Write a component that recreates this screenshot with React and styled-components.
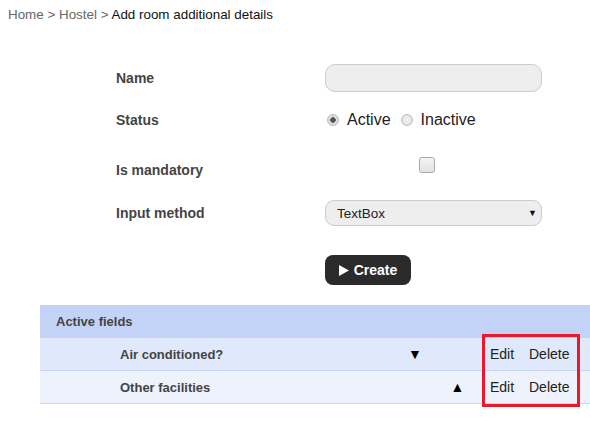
import React from 'react'
import styled, { createGlobalStyle } from 'styled-components'

const GlobalStyle = createGlobalStyle`
  body {
    margin: 0;
    background: #fff;
    font-family: "Liberation Sans", Arial, sans-serif;
  }
`

const Page = styled.div`
  width: 590px;
  height: 422px;
  overflow: hidden;
`

const Breadcrumb = styled.div`
  padding: 7px 0 0 8px;
  height: 17px;
  font-size: 13.4px;
  color: #666;
  & b { font-weight: normal; color: #111; }
`

const Form = styled.div`
  margin: 38px 0 0 116px;
  display: flex;
  flex-direction: column;
`

const Row = styled.div`
  display: flex;
  align-items: center;
  height: ${p => p.$h || 32}px;
  margin-top: ${p => p.$gap || 0}px;
`

const Label = styled.div`
  width: 209px;
  font-size: 14px;
  font-weight: bold;
  color: #444;
`

const TextInput = styled.input`
  box-sizing: border-box;
  width: 217px;
  height: 28px;
  border: 1px solid #ccc;
  border-radius: 10px;
  background: #eee;
  outline: none;
`

const RadioGroup = styled.div`
  display: flex;
  align-items: center;
  font-size: 16px;
  color: #222;
`

const Radio = styled.span`
  width: 10px;
  height: 10px;
  border-radius: 50%;
  border: 1px solid #bbb;
  background: radial-gradient(circle, ${p => p.$on ? '#555 0 2.5px, #ddd 3px' : '#f2f2f2 0, #ddd 100%'});
  margin: 0 8px 0 2px;
  ${p => p.$second && 'margin-left: 10px;'}
`

const Check = styled.span`
  width: 14px;
  height: 14px;
  border: 1px solid #aaa;
  border-radius: 3px;
  background: linear-gradient(#f4f4f4, #e2e2e2);
  margin: 0 0 10px 94px;
`

const SelectWrap = styled.div`
  position: relative;
  width: 217px;
  height: 26px;
`

const Select = styled.select`
  appearance: none;
  box-sizing: border-box;
  width: 100%;
  height: 100%;
  border: 1px solid #ccc;
  border-radius: 9px;
  background: #eee;
  padding: 0 0 0 11px;
  font-family: "Liberation Sans", Arial, sans-serif;
  font-size: 13.5px;
  color: #222;
  outline: none;
`

const Caret = styled.span`
  position: absolute;
  right: 5px;
  top: 8px;
  font-size: 9px;
  color: #111;
  pointer-events: none;
`

const CreateButton = styled.button`
  width: 86px;
  height: 30px;
  border: none;
  border-radius: 8px;
  background: #2b2b2b;
  color: #fff;
  font-family: "Liberation Sans", Arial, sans-serif;
  font-size: 14px;
  font-weight: bold;
  display: flex;
  align-items: center;
  justify-content: center;
  gap: 5px;
  padding: 0;
  margin-left: 209px;
`

const Fields = styled.div`
  position: relative;
  margin: 19px 0 0 40px;
`

const Header = styled.div`
  height: 33px;
  background: #c3d3f7;
  display: flex;
  align-items: center;
  padding-left: 16px;
  font-size: 13px;
  font-weight: bold;
  color: #444;
`

const FieldRow = styled.div`
  display: grid;
  grid-template-columns: 360px 40px 40px 42px 1fr;
  align-items: center;
  height: 32px;
  background: ${p => p.$bg};
  border-bottom: 1px solid #c8d6f5;
  font-size: 14px;
  color: #222;
`

const FieldName = styled.div`
  padding-left: 80px;
  font-size: 13px;
  font-weight: bold;
  color: #444;
`

const Arrow = styled.div`
  text-align: center;
  font-size: 14px;
  color: #000;
  margin-left: ${p => p.$shift || 0}px;
`

const Action = styled.div`
  padding-left: ${p => p.$pad || 0}px;
`

const Highlight = styled.div`
  position: absolute;
  left: 442px;
  top: 29px;
  width: 92px;
  height: 67px;
  border: 3px solid #e8192c;
  pointer-events: none;
`

const fields = [
  { name: 'Air conditioned?', down: true, up: false, bg: '#e0e9fc' },
  { name: 'Other facilities', down: false, up: true, bg: '#eef2fd' },
]

const PlayIcon = () => (
  <svg width="10" height="11" viewBox="0 0 10 11">
    <polygon points="0,0 10,5.5 0,11" fill="#fff" />
  </svg>
)

export default function App() {
  return (
    <Page>
      <GlobalStyle />
      <Breadcrumb>Home &gt; Hostel &gt; <b>Add room additional details</b></Breadcrumb>
      <Form>
        <Row>
          <Label>Name</Label>
          <TextInput />
        </Row>
        <Row $gap={10}>
          <Label>Status</Label>
          <RadioGroup>
            <Radio $on />Active
            <Radio $second />Inactive
          </RadioGroup>
        </Row>
        <Row $gap={16} $h={36}>
          <Label>Is mandatory</Label>
          <Check />
        </Row>
        <Row $gap={9}>
          <Label>Input method</Label>
          <SelectWrap>
            <Select defaultValue="TextBox">
              <option>TextBox</option>
            </Select>
            <Caret>▼</Caret>
          </SelectWrap>
        </Row>
        <Row $gap={25}>
          <CreateButton><PlayIcon />Create</CreateButton>
        </Row>
      </Form>
      <Fields>
        <Header>Active fields</Header>
        {fields.map(f => (
          <FieldRow key={f.name} $bg={f.bg}>
            <FieldName>{f.name}</FieldName>
            <Arrow $shift={-10}>{f.down ? '▼' : ''}</Arrow>
            <Arrow $shift={-5}>{f.up ? '▲' : ''}</Arrow>
            <Action $pad={10}>Edit</Action>
            <Action $pad={7}>Delete</Action>
          </FieldRow>
        ))}
        <Highlight />
      </Fields>
    </Page>
  )
}
